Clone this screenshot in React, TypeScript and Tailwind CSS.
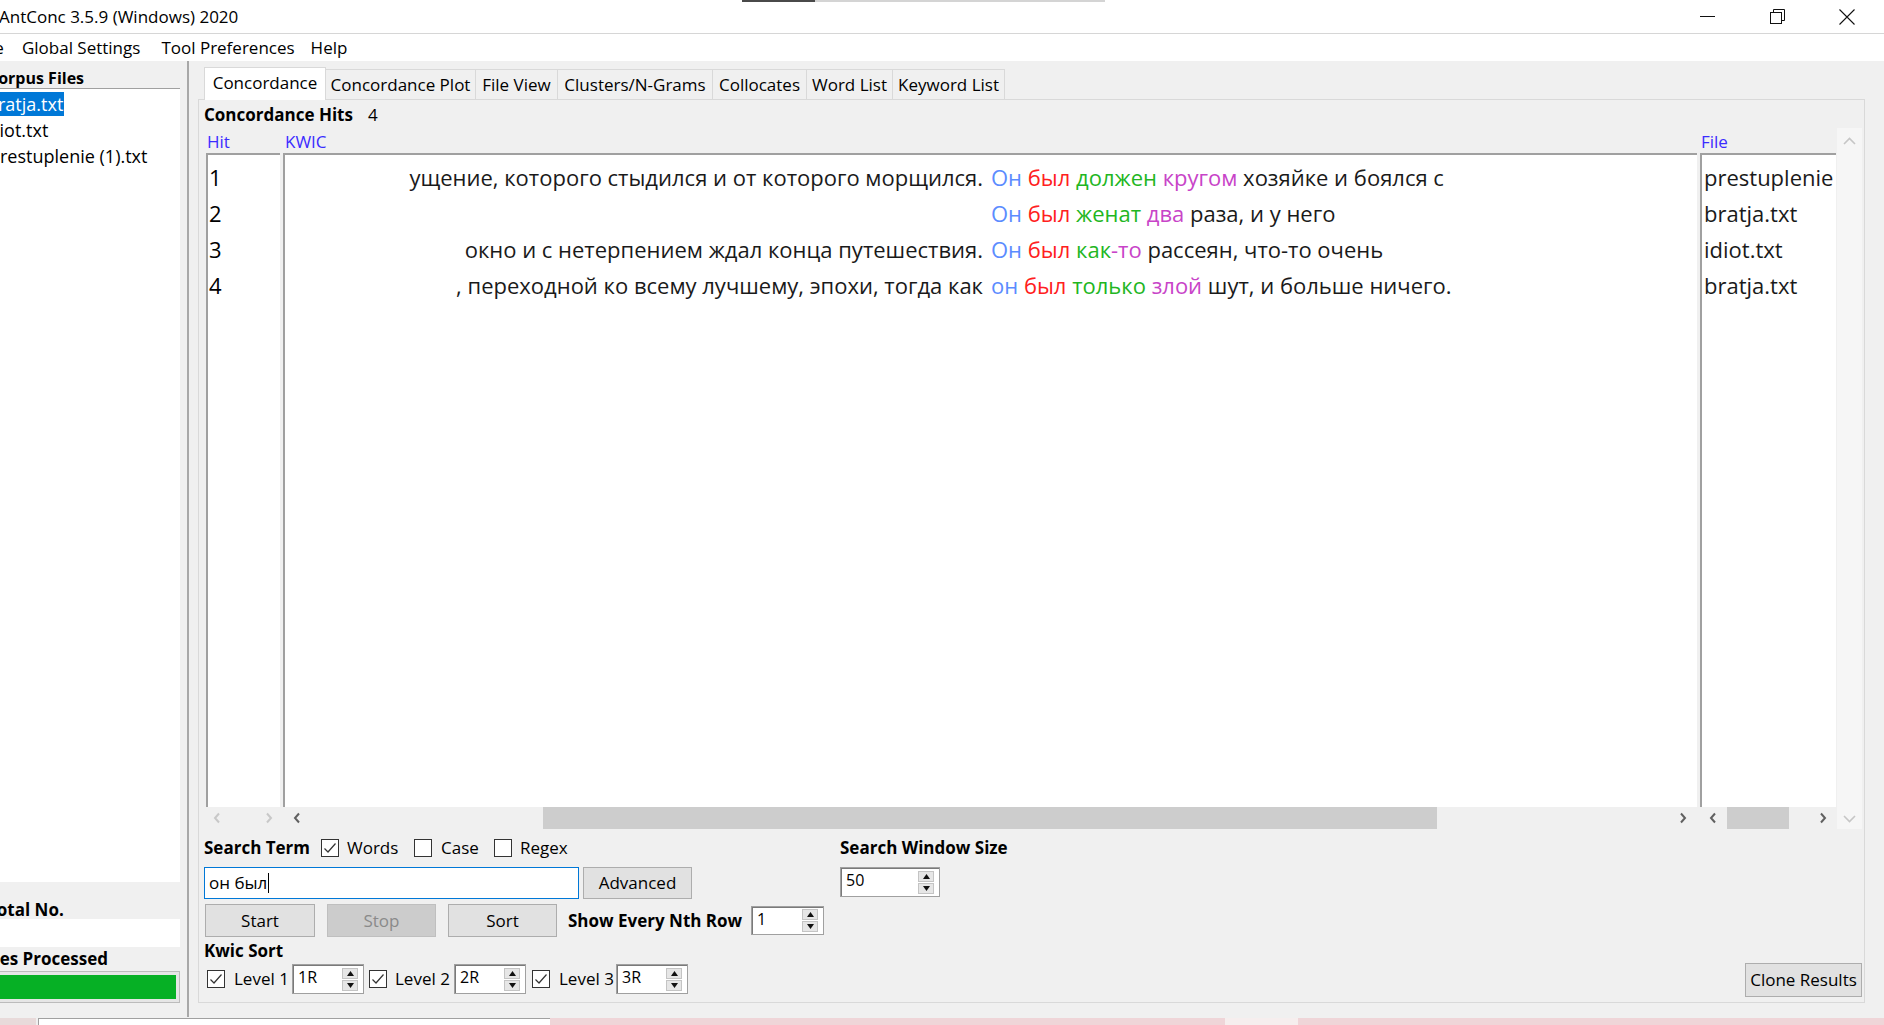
import React from "react";

type Seg = { t: string; c?: string };

const kb = "text-[#5b8cff]";
const kr = "text-[#ff2020]";
const kg = "text-[#22b622]";
const km = "text-[#c844c8]";

const hits: { n: string; left: string; right: Seg[]; file: string }[] = [
  {
    n: "1",
    left: "ущение, которого стыдился и от которого морщился.",
    right: [
      { t: "Он", c: kb }, { t: " " }, { t: "был", c: kr }, { t: " " },
      { t: "должен", c: kg }, { t: " " }, { t: "кругом", c: km }, { t: " хозяйке и боялся с" },
    ],
    file: "prestuplenie",
  },
  {
    n: "2",
    left: "",
    right: [
      { t: "Он", c: kb }, { t: " " }, { t: "был", c: kr }, { t: " " },
      { t: "женат", c: kg }, { t: " " }, { t: "два", c: km }, { t: " раза, и у него" },
    ],
    file: "bratja.txt",
  },
  {
    n: "3",
    left: "окно и с нетерпением ждал конца путешествия.",
    right: [
      { t: "Он", c: kb }, { t: " " }, { t: "был", c: kr }, { t: " " },
      { t: "как", c: kg }, { t: "-то", c: km }, { t: " рассеян, что-то очень" },
    ],
    file: "idiot.txt",
  },
  {
    n: "4",
    left: ", переходной ко всему лучшему, эпохи, тогда как",
    right: [
      { t: "он", c: kb }, { t: " " }, { t: "был", c: kr }, { t: " " },
      { t: "только", c: kg }, { t: " " }, { t: "злой", c: km }, { t: " шут, и больше ничего." },
    ],
    file: "bratja.txt",
  },
];

const tabs = [
  { label: "Concordance Plot", w: "w-[150px]" },
  { label: "File View", w: "w-[82px]" },
  { label: "Clusters/N-Grams", w: "w-[155px]" },
  { label: "Collocates", w: "w-[94px]" },
  { label: "Word List", w: "w-[86px]" },
  { label: "Keyword List", w: "w-[112px]" },
];

function Chevron({ dir, color }: { dir: "l" | "r"; color: string }) {
  return (
    <svg width="8" height="12" viewBox="0 0 8 12">
      <polyline
        points={dir === "l" ? "6,1.5 2,6 6,10.5" : "2,1.5 6,6 2,10.5"}
        fill="none"
        stroke={color}
        strokeWidth="2"
      />
    </svg>
  );
}

function Check({ on }: { on?: boolean }) {
  return (
    <span className="flex h-[18px] w-[18px] shrink-0 items-center justify-center border border-[#333333] bg-white">
      {on && (
        <svg width="14" height="14" viewBox="0 0 14 14">
          <polyline points="1.5,7.5 5,11 12.5,2.5" fill="none" stroke="#333333" strokeWidth="1.2" />
        </svg>
      )}
    </span>
  );
}

function ArrowBtn({ up }: { up?: boolean }) {
  return (
    <span className="flex h-[11px] w-[16px] items-center justify-center border border-[#c4c4c4] bg-[#e6e6e6]">
      <svg width="7" height="5" viewBox="0 0 7 5">
        <polygon points={up ? "3.5,0 7,5 0,5" : "0,0 7,0 3.5,5"} fill="#111111" />
      </svg>
    </span>
  );
}

function Spin({ value, cls }: { value: string; cls: string }) {
  return (
    <div className={"flex border border-[#a0a0a0] bg-white shadow-[inset_1px_1px_0_#7a7a7a] " + cls}>
      <span className="flex-1 pl-[5px] pt-[1px] text-[16px] leading-[22px]">{value}</span>
      <div className="flex flex-col justify-center gap-[1px] pr-[5px]">
        <ArrowBtn up />
        <ArrowBtn />
      </div>
    </div>
  );
}

function Btn({ children, cls }: { children: React.ReactNode; cls: string }) {
  return (
    <div className={"flex items-center justify-center border text-[17px] " + cls}>{children}</div>
  );
}

function TitleBar() {
  return (
    <div className="relative flex h-[34px] shrink-0 items-center border-b border-[#d6d6d6] bg-white">
      <div className="absolute left-[742px] top-0 h-[2px] w-[73px] bg-[#4a4a4a]" />
      <div className="absolute left-[815px] top-0 h-[2px] w-[290px] bg-[#d4d4d4]" />
      <span className="ml-[-1px] text-[17px] leading-[34px]">AntConc 3.5.9 (Windows) 2020</span>
      <div className="ml-auto mr-[2px] flex h-full">
        <div className="flex w-[70px] items-center justify-center">
          <div className="h-[1px] w-[15px] bg-[#111111]" />
        </div>
        <div className="flex w-[70px] items-center justify-center">
          <svg width="15" height="15" viewBox="0 0 15 15">
            <rect x="0.5" y="3.5" width="11" height="11" fill="none" stroke="#111111" />
            <path d="M3.5 3.5 V0.5 H14.5 V11.5 H11.5" fill="none" stroke="#111111" />
          </svg>
        </div>
        <div className="flex w-[70px] items-center justify-center">
          <svg width="16" height="16" viewBox="0 0 16 16">
            <path d="M0.5 0.5 L15.5 15.5 M15.5 0.5 L0.5 15.5" stroke="#111111" strokeWidth="1.1" />
          </svg>
        </div>
      </div>
    </div>
  );
}

function MenuBar() {
  return (
    <div className="flex h-[27px] shrink-0 items-center bg-white text-[17px]">
      <span className="ml-[-23px]">File</span>
      <span className="ml-[18px]">Global Settings</span>
      <span className="ml-[21px]">Tool Preferences</span>
      <span className="ml-[16px]">Help</span>
    </div>
  );
}

function LeftPanel() {
  return (
    <div className="flex w-[180px] shrink-0 flex-col pt-[7px]">
      <div className="flex h-[20px] items-center whitespace-nowrap text-[16px] font-bold">
        <span className="ml-[-12px]">Corpus Files</span>
      </div>
      <div className="h-[794px] border-t border-[#a0a0a0] bg-white pt-[3px] text-[18px]">
        <div className="flex h-[26px] items-start">
          <span className="ml-[-13px] bg-[#0078d7] pr-[1px] leading-[24px] text-white">bratja.txt</span>
        </div>
        <div className="flex h-[26px] items-start">
          <span className="ml-[-16px] leading-[24px]">idiot.txt</span>
        </div>
        <div className="flex h-[26px] items-start">
          <span className="ml-[-11px] leading-[24px]">prestuplenie (1).txt</span>
        </div>
      </div>
      <div className="mt-[18px] flex h-[19px] items-center whitespace-nowrap text-[17px] font-bold">
        <span className="ml-[-13px]">Total No.</span>
      </div>
      <div className="h-[28px] bg-white" />
      <div className="mt-[2px] flex h-[20px] items-center whitespace-nowrap text-[17px] font-bold">
        <span className="ml-[-20px]">Files Processed</span>
      </div>
      <div className="ml-[-4px] mt-[2px] h-[32px] w-[184px] border border-[#bcbcbc] bg-[#e6e6e6] p-[3px]">
        <div className="h-full w-full bg-[#06b025]" />
      </div>
    </div>
  );
}

function HScroll({ kind }: { kind: "hit" | "kwic" | "file" }) {
  if (kind === "hit") {
    return (
      <div className="flex h-[22px] items-center">
        <div className="flex w-[22px] justify-center"><Chevron dir="l" color="#c8c8c8" /></div>
        <div className="flex-1" />
        <div className="flex w-[22px] justify-center"><Chevron dir="r" color="#c8c8c8" /></div>
      </div>
    );
  }
  if (kind === "kwic") {
    return (
      <div className="flex h-[22px] items-center">
        <div className="flex w-[28px] justify-center"><Chevron dir="l" color="#606060" /></div>
        <div className="flex h-full flex-1">
          <div className="ml-[232px] h-full w-[894px] bg-[#cdcdcd]" />
        </div>
        <div className="flex w-[28px] justify-center"><Chevron dir="r" color="#606060" /></div>
      </div>
    );
  }
  return (
    <div className="flex h-[22px] items-center">
      <div className="flex w-[26px] justify-center"><Chevron dir="l" color="#606060" /></div>
      <div className="flex h-full flex-1">
        <div className="ml-[1px] h-full w-[62px] bg-[#cdcdcd]" />
      </div>
      <div className="flex w-[26px] justify-center"><Chevron dir="r" color="#606060" /></div>
    </div>
  );
}

function Results() {
  return (
    <div className="mt-[6px] flex pl-[7px]">
      {/* Hit */}
      <div className="flex w-[74px] flex-col">
        <div className="h-[22px] pl-[1px] text-[17px] leading-[22px] text-[#3b2cff]">Hit</div>
        <div className="h-[654px] border-l-2 border-t-2 border-[#a0a0a0] bg-white pt-[4px] text-[22px]">
          {hits.map((h) => (
            <div key={h.n} className="flex h-[36px] items-center pl-[1px]">{h.n}</div>
          ))}
        </div>
        <HScroll kind="hit" />
      </div>
      {/* KWIC */}
      <div className="ml-[3px] flex w-[1414px] flex-col">
        <div className="h-[22px] pl-[2px] text-[17px] leading-[22px] text-[#3b2cff]">KWIC</div>
        <div className="h-[654px] overflow-hidden border-l-2 border-t-2 border-[#a0a0a0] bg-white pt-[4px] text-[22px]">
          {hits.map((h) => (
            <div key={h.n} className="flex h-[36px] items-center whitespace-nowrap text-[#1a1a1a]">
              <span className="w-[698px] shrink-0 overflow-hidden text-right">{h.left}</span>
              <span className="ml-[8px] whitespace-pre">
                {h.right.map((s, i) => (
                  <span key={i} className={s.c}>{s.t}</span>
                ))}
              </span>
            </div>
          ))}
        </div>
        <HScroll kind="kwic" />
      </div>
      {/* File */}
      <div className="ml-[3px] flex w-[136px] flex-col">
        <div className="h-[22px] pl-[1px] text-[17px] leading-[22px] text-[#3b2cff]">File</div>
        <div className="h-[654px] overflow-hidden border-l-2 border-t-2 border-[#a0a0a0] bg-white pt-[4px] text-[22px] text-[#1a1a1a]">
          {hits.map((h) => (
            <div key={h.n} className="flex h-[36px] items-center whitespace-nowrap pl-[2px]">{h.file}</div>
          ))}
        </div>
        <HScroll kind="file" />
      </div>
      {/* vertical scrollbar */}
      <div className="ml-[1px] mt-[-3px] flex h-[701px] w-[25px] flex-col items-center justify-between bg-[#f6f6f6] pb-[6px] pt-[9px]">
        <svg width="13" height="8" viewBox="0 0 13 8">
          <polyline points="1,7 6.5,1.5 12,7" fill="none" stroke="#c6c6c6" strokeWidth="1.6" />
        </svg>
        <svg width="13" height="8" viewBox="0 0 13 8">
          <polyline points="1,1 6.5,6.5 12,1" fill="none" stroke="#c6c6c6" strokeWidth="1.6" />
        </svg>
      </div>
    </div>
  );
}

function Controls() {
  return (
    <div className="mt-[9px] flex pl-[5px]">
      <div className="flex w-[636px] flex-col">
        <div className="flex h-[20px] items-center text-[17px]">
          <span className="w-[117px] font-bold">Search Term</span>
          <Check on />
          <span className="w-[75px] pl-[8px]">Words</span>
          <Check />
          <span className="w-[62px] pl-[9px]">Case</span>
          <Check />
          <span className="pl-[8px]">Regex</span>
        </div>
        <div className="mt-[9px] flex h-[32px]">
          <div className="flex w-[375px] items-center border border-[#0078d7] bg-white pl-[4px] text-[17px]">
            <span>он был</span>
            <span className="ml-[1px] h-[20px] w-[1px] bg-black" />
          </div>
          <Btn cls="ml-[4px] w-[109px] border-[#adadad] bg-[#e1e1e1]">Advanced</Btn>
        </div>
        <div className="mt-[5px] flex h-[33px] items-center">
          <Btn cls="ml-[1px] h-full w-[110px] border-[#adadad] bg-[#e1e1e1]">Start</Btn>
          <Btn cls="ml-[12px] h-full w-[109px] border-[#bfbfbf] bg-[#cccccc] text-[#8a8a8a]">Stop</Btn>
          <Btn cls="ml-[12px] h-full w-[109px] border-[#adadad] bg-[#e1e1e1]">Sort</Btn>
          <span className="ml-[11px] w-[183px] text-[17px] font-bold">Show Every Nth Row</span>
          <Spin value="1" cls="h-[29px] w-[73px]" />
        </div>
        <div className="mt-[4px] flex h-[20px] items-center text-[17px] font-bold">Kwic Sort</div>
        <div className="mt-[3px] flex h-[30px] items-center text-[17px]">
          <span className="ml-[3px]"><Check on /></span>
          <span className="w-[67px] pl-[9px]">Level 1</span>
          <Spin value="1R" cls="h-[30px] w-[72px]" />
          <span className="ml-[5px]"><Check on /></span>
          <span className="w-[67px] pl-[8px]">Level 2</span>
          <Spin value="2R" cls="h-[30px] w-[72px]" />
          <span className="ml-[6px]"><Check on /></span>
          <span className="w-[66px] pl-[9px]">Level 3</span>
          <Spin value="3R" cls="h-[30px] w-[72px]" />
        </div>
      </div>
      <div className="flex flex-col">
        <div className="flex h-[20px] items-center text-[17px] font-bold">Search Window Size</div>
        <Spin value="50" cls="mt-[9px] h-[30px] w-[100px]" />
      </div>
      <div className="mb-[-3px] ml-auto mr-[2px] self-end">
        <Btn cls="h-[34px] w-[117px] border-[#adadad] bg-[#e1e1e1]">Clone Results</Btn>
      </div>
    </div>
  );
}

function MainPanel() {
  return (
    <div className="flex flex-1 flex-col pr-[19px] pt-[6px]">
      <div className="flex h-[33px] items-end whitespace-nowrap pl-[6px] text-[17px]">
        <div className="relative z-10 flex h-[33px] w-[122px] items-start justify-center border border-b-0 border-[#d9d9d9] bg-white pt-[2px]">
          Concordance
        </div>
        {tabs.map((t) => (
          <div
            key={t.label}
            className={"flex h-[31px] items-center justify-center border border-l-0 border-[#d9d9d9] bg-[#f0f0f0] " + t.w}
          >
            {t.label}
          </div>
        ))}
      </div>
      <div className="mt-[-1px] flex h-[904px] flex-col border border-[#d9d9d9]">
        <div className="mt-[5px] flex h-[20px] items-center pl-[5px] text-[17px]">
          <span className="font-bold">Concordance Hits</span>
          <span className="ml-[15px]">4</span>
        </div>
        <Results />
        <Controls />
      </div>
    </div>
  );
}

function BottomStrip() {
  return (
    <div className="flex h-[7px] shrink-0">
      <div className="w-[36px] bg-[#e8dada]" />
      <div className="ml-[2px] w-[512px] border-l border-t border-[#a0a0a0] bg-white" />
      <div className="w-[675px] bg-[#efd5d8]" />
      <div className="w-[73px] bg-[#f6eeee]" />
      <div className="flex-1 bg-[#efd5d8]" />
    </div>
  );
}

export default function App() {
  return (
    <div className="flex h-[1025px] w-[1884px] flex-col overflow-hidden bg-[#f0f0f0] font-['Open_Sans',sans-serif] text-black">
      <TitleBar />
      <MenuBar />
      <div className="flex h-[957px] shrink-0">
        <LeftPanel />
        <div className="flex w-[18px] shrink-0 pl-[7px]">
          <div className="mb-[1px] w-[2px] bg-[#a8a8a8]" />
        </div>
        <MainPanel />
      </div>
      <BottomStrip />
    </div>
  );
}
